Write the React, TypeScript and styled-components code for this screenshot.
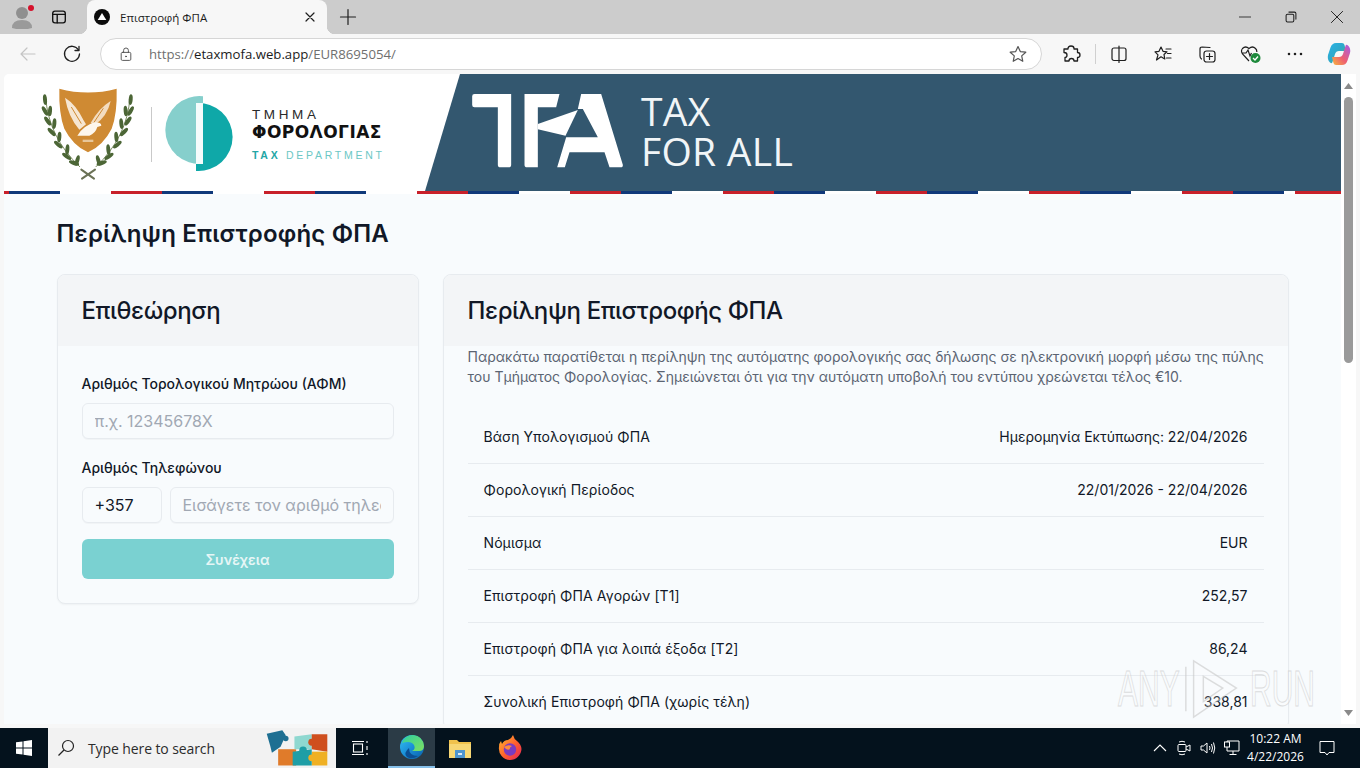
import React from "react";
import styled, { createGlobalStyle } from "styled-components";

const Global = createGlobalStyle`
  html, body { margin: 0; padding: 0; width: 1360px; height: 768px; overflow: hidden; background: #f7f7f7; }
  * { box-sizing: border-box; }
  #root { width: 1360px; height: 768px; }
`;

const UI = `"Open Sans", "Noto Sans", "Liberation Sans", sans-serif`;
const WEB = `Inter, "Noto Sans", "Liberation Sans", sans-serif`;

const Shell = styled.div`
  width: 1360px; height: 768px; display: flex; flex-direction: column; overflow: hidden; font-family: ${UI};
`;
const TabStrip = styled.div`
  height: 34px; flex: none; background: #cccccc; display: flex; align-items: stretch; padding-left: 4px;
`;
const StripSlot = styled.div<{ $w: number }>`
  width: ${(p) => p.$w}px; flex: none; display: flex; align-items: center; justify-content: center; position: relative;
`;
const Tab = styled.div`
  width: 240px; flex: none; margin-left: 9px; margin-right: 4px; background: #f7f7f7; border-radius: 8px 8px 0 0;
  display: flex; align-items: center; padding: 0 9px 0 7px; gap: 10px; position: relative;
  &::before, &::after {
    content: ""; position: absolute; bottom: 0; width: 8px; height: 8px;
  }
  &::before { left: -8px; background: radial-gradient(circle at 0 0, transparent 8px, #f7f7f7 8.5px); }
  &::after { right: -8px; background: radial-gradient(circle at 100% 0, transparent 8px, #f7f7f7 8.5px); }
`;
const TabTitle = styled.span`
  flex: 1; font-size: 11.5px; color: #1c1c1c; white-space: nowrap;
`;
const Spacer = styled.div`flex: 1;`;
const RedDot = styled.span`
  position: absolute; top: 5px; right: 6px; width: 6px; height: 6px; border-radius: 50%; background: #d5112b;
`;
const Toolbar = styled.div`
  height: 40px; flex: none; background: #f7f7f7; display: flex; align-items: center; padding-left: 6px;
`;
const ToolSlot = styled.div<{ $w?: number }>`
  width: ${(p) => p.$w ?? 44}px; flex: none; height: 32px; display: flex; align-items: center; justify-content: center;
`;
const AddressBar = styled.div`
  width: 942px; height: 32px; flex: none; margin-left: 6px; margin-right: 7px; background: #fff; border: 1px solid #d6d6d6;
  border-radius: 16px; display: flex; align-items: center; padding: 0 13px 0 17px;
`;
const Url = styled.span`
  flex: 1; margin-left: 15px; font-size: 13.2px; color: #6f6f6f; white-space: nowrap;
  b { font-weight: 400; color: #1c1c1c; }
`;
const ToolDivider = styled.div`
  width: 1px; height: 20px; margin: 0 1px 0 2px; flex: none; background: #d0d0d0;
`;
const ViewRow = styled.div`
  height: 654px; flex: none; padding: 0 4px 4px; display: flex; background: #f7f7f7;
`;
const Viewport = styled.main`
  flex: 1; min-width: 0; overflow: hidden; position: relative; background: #f8fbfd; border-top-left-radius: 5px; font-family: ${WEB}; color: #111827;
`;
const Banner = styled.header`
  height: 117px; display: flex; background: #fff;
`;
const BrandSide = styled.div`
  width: 421px; flex: none; display: flex; align-items: center; padding-left: 36px; padding-top: 3px;
`;
const BrandDivider = styled.div`
  width: 1px; height: 55px; background: #c9c9c9; margin: 0 13px 0 16px; flex: none;
`;
const DeptText = styled.div`
  margin-left: 18px; display: flex; flex-direction: column; font-family: "Liberation Sans", sans-serif;
`;
const DeptTop = styled.span`
  font-size: 13.5px; line-height: 16px; letter-spacing: 3.6px; color: #2a2a2a;
`;
const DeptMain = styled.span`
  font-family: "DejaVu Sans", sans-serif; font-size: 17px; line-height: 19px; font-weight: 700; letter-spacing: 0.45px; color: #111; white-space: nowrap;
`;
const DeptSub = styled.span`
  font-size: 10.5px; line-height: 14px; margin-top: 6px; letter-spacing: 2.72px; color: #6cc7c5; white-space: nowrap;
  b { color: #23a6a6; }
`;
const HeroSide = styled.div`
  flex: 1; background: #33576f; clip-path: polygon(35px 0, 100% 0, 100% 100%, 0 100%);
  display: flex; align-items: center; padding-left: 47px; padding-bottom: 4px; color: #fff;
`;
const HeroText = styled.div`
  margin-left: 17px; font-family: "Open Sans", sans-serif; font-size: 39px; line-height: 40px; color: #f1f5f7; letter-spacing: 0.3px;
`;
const Stripe = styled.div`
  height: 3px; background: repeating-linear-gradient(90deg, #c8202a 0 51px, #10397a 51px 102px, #fff 102px 153px);
  background-position: -46px 0;
`;
const Page = styled.div`
  width: 1232px; margin: 0 auto; padding-top: 24px;
`;
const PageTitle = styled.h1`
  margin: 0; font-size: 24px; line-height: 32px; font-weight: 600; color: #111827; letter-spacing: 0.17px;
`;
const Columns = styled.div`
  display: grid; grid-template-columns: 362px 846px; gap: 24px; margin-top: 24px; align-items: start;
`;
const Card = styled.section`
  border: 1px solid #e7ebef; border-radius: 8px; background: #f8fbfd; box-shadow: 0 1px 2px rgba(0,0,0,.04); overflow: hidden;
`;
const CardHead = styled.div`
  height: 71px; background: #f3f5f7; padding: 0 24px; display: flex; align-items: center;
`;
const CardTitle = styled.h2`
  margin: 0; font-size: 24px; font-weight: 500; color: #111827; letter-spacing: -0.4px;
`;
const Form = styled.form`
  padding: 24px; display: flex; flex-direction: column;
`;
const Label = styled.label`
  font-size: 14px; line-height: 28px; font-weight: 500; color: #111827; margin-bottom: 5px;
`;
const Input = styled.input<{ $w?: number }>`
  height: 36px; padding: 0 12px; border: 1px solid #e7ebef; border-radius: 6px; background: #f8fbfd; font-family: ${WEB}; font-size: 16px; color: #111827;
  width: ${(p) => (p.$w ? `${p.$w}px` : "100%")}; flex: ${(p) => (p.$w ? "none" : "1 1 auto")}; min-width: 0; box-shadow: 0 1px 1px rgba(0,0,0,.03); outline: none;
  &::placeholder { color: #a1a8b3; opacity: 1; }
`;
const Gap = styled.div`height: 15px; flex: none;`;
const PhoneRow = styled.div`display: flex; gap: 8px; flex: none;`;
const Continue = styled.button`
  height: 40px; margin-top: 16px; border: 0; border-radius: 6px; background: #7ad1d1; color: #e6f6f6; font-family: ${WEB}; font-size: 14px; font-weight: 600; flex: none;
`;
const CardIntro = styled.p`
  margin: 1px 0 0; padding: 0 16px 0 24px; font-size: 14px; line-height: 20px; color: #5b6472;
`;
const Rows = styled.div`
  margin: 24px 24px 0; display: flex; flex-direction: column;
`;
const Row = styled.div`
  height: 53px; flex: none; display: flex; align-items: center; justify-content: space-between; padding: 0 16px 2px;
  font-size: 14px; color: #111827; border-bottom: 1px solid #e7ebef;
`;
const RowLabel = styled.span`letter-spacing: 0.08px;`;
const Scrollbar = styled.div`
  width: 15px; flex: none; background: #fff; display: flex; flex-direction: column; align-items: center; padding: 9px 0 8px;
`;
const ScrollArrow = styled.svg`width: 9px; height: 6px; flex: none; fill: #8a8a8a;`;
const ScrollThumb = styled.div`
  width: 9px; height: 266px; border-radius: 5px; background: #9a9a9a; margin-top: 8px; flex: none;
`;
const Watermark = styled.div`
  position: absolute; left: 1114px; top: 584px; display: flex; align-items: center; pointer-events: none; opacity: .6;
`;
const WatermarkWord = styled.span`
  font-family: "Liberation Sans", sans-serif; font-size: 50px; line-height: 50px; color: rgba(255,255,255,.4); -webkit-text-stroke: 1px #c9c9c9;
  display: inline-block; width: 62px; transform: scaleX(.6); transform-origin: left center; white-space: nowrap;
`;
const Taskbar = styled.footer`
  height: 40px; flex: none; background: #04121d; display: flex; align-items: stretch; color: #fff;
`;
const Start = styled.div`
  width: 48px; flex: none; display: flex; align-items: center; justify-content: center;
`;
const Search = styled.div`
  width: 288px; flex: none; background: #f2f2f2; display: flex; align-items: center; padding: 0 8px 0 9px; color: #333;
`;
const SearchText = styled.span`
  margin-left: 13px; flex: 1; font-size: 14px; letter-spacing: -0.1px; color: #2c2c2c;
`;
const TaskIcon = styled.div<{ $active?: boolean; $w: number; $pr?: number }>`
  width: ${(p) => p.$w}px; flex: none; display: flex; align-items: center; justify-content: center; padding-right: ${(p) => p.$pr ?? 0}px;
  background: ${(p) => (p.$active ? "#2b3b46" : "transparent")}; border-bottom: ${(p) => (p.$active ? "2px solid #86c0ea" : "0")};
`;
const Tray = styled.div`
  margin-left: auto; display: flex; align-items: center; padding-right: 13px;
`;
const TrayIcon = styled.div<{ $w?: number }>`
  width: ${(p) => p.$w ?? 24}px; display: flex; align-items: center; justify-content: center; flex: none;
`;
const Clock = styled.div`
  width: 63px; text-align: center; font-size: 12px; line-height: 18px; color: #fff; flex: none;
`;

const S = { fill: "none", stroke: "#1f1f1f", strokeWidth: 1.2, strokeLinecap: "round" as const, strokeLinejoin: "round" as const };

const Leaf = ({ x, y, r }: { x: number; y: number; r: number }) => (
  <ellipse cx={x} cy={y} rx="6" ry="16" fill="#4c6636" transform={`rotate(${r} ${x} ${y})`} />
);
const leavesL: [number, number, number][] = [
  [135, 78, -5], [135, 112, -30], [150, 112, 5], [143, 142, -35], [163, 150, 5], [155, 175, -45],
  [178, 190, 5], [175, 213, -50], [202, 228, 5], [200, 248, -55], [232, 260, 15], [222, 268, -70],
];
const Branch = () => (
  <>
    <path d="M137 70Q145 190 240 280" fill="none" stroke="#7d8f63" strokeWidth="3" />
    {leavesL.map(([x, y, r]) => <Leaf key={`${x}${y}`} x={x} y={y} r={r} />)}
  </>
);
const Emblem = () => (
  <svg width="95" height="95" viewBox="120 40 285 285" style={{ flex: "none" }}>
    <path d="M178 45 Q264 68 350 45 Q352 120 335 165 Q310 215 264 236 Q218 215 193 165 Q176 120 178 45Z" fill="#cf8a33" />
    <path d="M195 72 Q228 92 252 142 L258 152 L238 168 Q205 130 195 72Z" fill="#f6e6d2" />
    <path d="M332 82 Q296 104 272 148 L284 154 Q322 128 332 82Z" fill="#f3dcc0" />
    <path d="M232 186 Q250 156 284 146 Q304 146 304 156 L292 160 Q286 180 268 186Z" fill="#fdf6ec" />
    <path d="M214 100L244 150M232 96L254 140M310 104L282 146" stroke="#cf8a33" strokeWidth="3" fill="none" />
    <rect x="248" y="198" width="32" height="7" fill="#e8c79a" />
    <Branch />
    <g transform="matrix(-1 0 0 1 527 0)"><Branch /></g>
    <path d="M246 315 L285 288 M282 315 L244 288" stroke="#6b7256" strokeWidth="6" strokeLinecap="round" />
  </svg>
);

const CircleLogo = () => (
  <svg width="69" height="78" viewBox="0 0 69 78" style={{ flex: "none" }}>
    <path d="M38 1.200A34 34 0 1 0 38 68.800Z" fill="#86cfcc" />
    <path d="M31 8.100A34 34 0 1 1 31 75.900Z" fill="#0fa8a8" />
    <rect x="31" y="8" width="7" height="61" fill="#f4fbfb" />
  </svg>
);

const TfaLogo = () => (
  <svg width="152" height="74" viewBox="188 60 455 222" style={{ flex: "none" }}>
    <g fill="#fff">
      <path d="M195 60H305V272Q305 280 297 280H273Q265 280 265 272V100H195Q188 100 188 93V67Q188 60 195 60Z" />
      <path d="M345 60H450L440 100H385V280H353Q345 280 345 272Z" />
      <path d="M385 150L505 108L468 185L385 166Z" />
      <path d="M515 60H575L640 272Q641 280 633 280H600L585 235H480L466 280H443L470 190H565L520 105H505Z" />
    </g>
  </svg>
);

const Avatar = () => (
  <svg width="22" height="24" viewBox="0 0 22 24">
    <circle cx="11" cy="8" r="6" fill="#8f8f8f" />
    <path d="M1 23Q1 15 11 15Q21 15 21 23Q11 26 1 23Z" fill="#9a9a9a" />
  </svg>
);
const Favicon = () => (
  <svg width="16" height="16" viewBox="0 0 16 16" style={{ flex: "none" }}>
    <circle cx="8" cy="8" r="8" fill="#0b0b0b" />
    <path d="M8 4L12.300 11H3.700Z" fill="#fff" />
  </svg>
);
const Ic = ({ size = 20, children }: { size?: number; children: React.ReactNode }) => (
  <svg width={size} height={size} viewBox="0 0 20 20" style={{ flex: "none" }} {...S}>{children}</svg>
);

const Copilot = () => (
  <svg width="24" height="24" viewBox="0 0 24 24">
    <defs>
      <linearGradient id="cpa" x1="0" y1="0" x2="1" y2="1"><stop offset="0" stopColor="#2ab4e8" /><stop offset=".5" stopColor="#2fa8c8" /><stop offset="1" stopColor="#4fc06a" /></linearGradient>
      <linearGradient id="cpb" x1="0" y1="1" x2="1" y2="0"><stop offset="0" stopColor="#f6b73c" /><stop offset=".45" stopColor="#ee5f70" /><stop offset="1" stopColor="#a65ce8" /></linearGradient>
    </defs>
    <path d="M9 1H15Q17 1 17.500 3L19 9H12Q9 9 8 12L5.500 20Q5 22 3 20.500Q0 18 1 13L3.500 5.500Q5 1 9 1Z" fill="url(#cpa)" />
    <path d="M15 23H9Q7 23 6.500 21L5 15H12Q15 15 16 12L18.500 4Q19 2 21 3.500Q24 6 23 11L20.500 18.500Q19 23 15 23Z" fill="url(#cpb)" />
  </svg>
);

const EdgeLogo = () => (
  <svg width="26" height="26" viewBox="0 0 26 26">
    <defs>
      <linearGradient id="eg" x1="0" y1="0" x2="1" y2="1"><stop offset="0" stopColor="#35c1f1" /><stop offset=".5" stopColor="#1a8fd8" /><stop offset="1" stopColor="#0a5fa8" /></linearGradient>
      <linearGradient id="eg2" x1="0" y1="0" x2="1" y2="1"><stop offset="0" stopColor="#2fd0a0" /><stop offset="1" stopColor="#7fe060" /></linearGradient>
    </defs>
    <circle cx="13" cy="13" r="12" fill="url(#eg)" />
    <path d="M3 9Q6 1 14 1Q24 2 25 12Q25 17 20 17H13Q17 15 15 11Q12 6 3 9Z" fill="url(#eg2)" />
    <path d="M10 14Q10 22 19 22Q13 26 8 23Q4 19 10 14Z" fill="#0b4f94" />
  </svg>
);

const Folder = () => (
  <svg width="24" height="22" viewBox="0 0 24 22">
    <path d="M1 3H9L11 5H23V20H1Z" fill="#f0c24c" />
    <rect x="1" y="7" width="22" height="14" fill="#f7d774" />
    <rect x="7" y="13" width="10" height="8" fill="#4d94cf" />
    <rect x="10" y="16" width="4" height="2" fill="#dfeaf3" />
  </svg>
);

const Firefox = () => (
  <svg width="24" height="26" viewBox="0 0 24 26">
    <defs>
      <linearGradient id="ff" x1="0" y1="0" x2="1" y2="1"><stop offset="0" stopColor="#ffbd2e" /><stop offset=".55" stopColor="#ff5c2e" /><stop offset="1" stopColor="#e2225c" /></linearGradient>
    </defs>
    <path d="M12 25A11.500 11.500 0 0 1 1 12Q1 8 3 6L4 9Q6 5 10 5Q14 3 15 0Q16 4 19 6Q23 9 23.500 14A11.500 11.500 0 0 1 12 25Z" fill="url(#ff)" />
    <circle cx="12" cy="14.500" r="6.200" fill="#7a3cc0" />
    <path d="M6 12Q10 9 14 11Q11 13 12 14Q9 16 6 12Z" fill="#ff8a3c" />
  </svg>
);

const Puzzle = () => (
  <svg width="63" height="36" viewBox="770 30 182 103" style={{ flex: "none" }}>
    <path d="M808 85H860V132H808Z" fill="#e07b2a" />
    <path d="M855 48L905 42V85H855Z" fill="#8fd8d0" />
    <path d="M905 42H950V92L905 85Z" fill="#cf4f1e" />
    <path d="M905 92H950V132H905Z" fill="#efb024" />
    <path d="M850 92L905 85V132H850Z" fill="#1f9ea6" />
    <circle cx="880" cy="88" r="11" fill="#1f9ea6" />
    <circle cx="905" cy="65" r="10" fill="#cf4f1e" />
    <circle cx="905" cy="110" r="10" fill="#efb024" />
    <path d="M775 40L820 30L830 45L822 62L815 78L790 95L785 75Z" fill="#1e6f92" />
    <circle cx="830" cy="54" r="8" fill="#1e6f92" />
  </svg>
);

export default function App() {
  const rows: [string, string][] = [
    ["Βάση Υπολογισμού ΦΠΑ", "Ημερομηνία Εκτύπωσης: 22/04/2026"],
    ["Φορολογική Περίοδος", "22/01/2026 - 22/04/2026"],
    ["Νόμισμα", "EUR"],
    ["Επιστροφή ΦΠΑ Αγορών [T1]", "252,57"],
    ["Επιστροφή ΦΠΑ για λοιπά έξοδα [T2]", "86,24"],
    ["Συνολική Επιστροφή ΦΠΑ (χωρίς τέλη)", "338,81"],
  ];
  return (
    <Shell>
      <Global />
      <TabStrip>
        <StripSlot $w={36}><Avatar /><RedDot /></StripSlot>
        <StripSlot $w={38}>
          <Ic size={18}><rect x="3" y="3.500" width="14" height="13" rx="2.500" strokeWidth="1.500" stroke="#111" /><path d="M3 7H17M8 7V16.500" strokeWidth="1.500" stroke="#111" /></Ic>
        </StripSlot>
        <Tab>
          <Favicon />
          <TabTitle>Επιστροφή ΦΠΑ</TabTitle>
          <Ic size={16}><path d="M5 5L15 15M15 5L5 15" strokeWidth="1.500" /></Ic>
        </Tab>
        <StripSlot $w={34}><Ic size={20}><path d="M10 2.500V17.500M2.500 10H17.500" /></Ic></StripSlot>
        <Spacer />
        <StripSlot $w={46}><Ic size={14}><path d="M2 10H18" /></Ic></StripSlot>
        <StripSlot $w={46}><Ic size={14}><rect x="3" y="6" width="11" height="11" rx="2" strokeWidth="1.500" /><path d="M7 3H15Q17 3 17 5V13" strokeWidth="1.500" /></Ic></StripSlot>
        <StripSlot $w={46}><Ic size={16}><path d="M3 3L17 17M17 3L3 17" /></Ic></StripSlot>
      </TabStrip>
      <Toolbar>
        <ToolSlot><Ic size={20}><path d="M17 10H3M9 4L3 10L9 16" stroke="#c4c4c4" /></Ic></ToolSlot>
        <ToolSlot><Ic size={20}><path d="M16.500 6A7.500 7.500 0 1 0 17.500 10" strokeWidth="1.300" /><path d="M17 2.500V6.500H13" strokeWidth="1.300" /></Ic></ToolSlot>
        <AddressBar>
          <Ic size={16}><rect x="4" y="8" width="12" height="10" rx="1.500" stroke="#555" /><path d="M7 8V5.500A3 3 0 0 1 13 5.500V8" stroke="#555" /><circle cx="10" cy="13" r=".6" fill="#555" stroke="#555" /></Ic>
          <Url>https://<b>etaxmofa.web.app</b>/EUR8695054/</Url>
          <Ic size={20}><path d="M10 2.500L12.300 7.600L17.800 8.200L13.700 11.900L14.800 17.300L10 14.600L5.200 17.300L6.300 11.900L2.200 8.200L7.700 7.600Z" stroke="#555" /></Ic>
        </AddressBar>
        <ToolSlot><Ic size={20}><path d="M7 4.500Q7 2 10 2Q13 2 13 4.500L13 5H16.500V8.500Q19 8.500 19 11T16.500 13.500V17H13Q13 14.500 10.500 14.500T8 17H4V13.500Q6 13.500 6 11T3 8.500V5H7Z" strokeWidth="1.300" /></Ic></ToolSlot>
        <ToolDivider />
        <ToolSlot><Ic size={20}><rect x="3" y="4" width="14" height="12.500" rx="2" /><path d="M10 2V18.500" /></Ic></ToolSlot>
        <ToolSlot><Ic size={20}><path d="M8 3L10 7.300L14 7.800L11 10.500L11.800 15L8 12.800L3.500 16L5 10.800L2 7.800L6 7.300Z" /><path d="M13 5H18M14.500 9.500H18M13.500 14H18" /></Ic></ToolSlot>
        <ToolSlot><Ic size={20}><path d="M13 3.500L5 3Q3 3 3 5V12Q3 14 4.500 15" /><rect x="7" y="7" width="11" height="11" rx="2.500" /><path d="M12.500 9.500V15.500M9.500 12.500H15.500" /></Ic></ToolSlot>
        <ToolSlot>
          <svg width="22" height="20" viewBox="0 0 22 20">
            <path d="M9 17L2.500 10Q0.500 7 2.500 4.500Q5.500 1.500 9 4.500Q12.500 1.500 15.500 4.500Q17 6 16.800 8M2 9H6L8 6L10 12L11.500 9" fill="none" stroke="#1f1f1f" strokeWidth="1.200" />
            <circle cx="15.500" cy="14" r="5" fill="#1e8a3c" />
            <path d="M13 14L15 16L18 12.500" fill="none" stroke="#fff" strokeWidth="1.300" />
          </svg>
        </ToolSlot>
        <ToolSlot><Ic size={20}><circle cx="4" cy="10" r=".7" fill="#1f1f1f" /><circle cx="10" cy="10" r=".7" fill="#1f1f1f" /><circle cx="16" cy="10" r=".7" fill="#1f1f1f" /></Ic></ToolSlot>
        <ToolSlot><Copilot /></ToolSlot>
      </Toolbar>
      <ViewRow>
        <Viewport>
          <Banner>
            <BrandSide>
              <Emblem />
              <BrandDivider />
              <CircleLogo />
              <DeptText>
                <DeptTop>ΤΜΗΜΑ</DeptTop>
                <DeptMain>ΦΟΡΟΛΟΓΙΑΣ</DeptMain>
                <DeptSub><b>TAX</b> DEPARTMENT</DeptSub>
              </DeptText>
            </BrandSide>
            <HeroSide>
              <TfaLogo />
              <HeroText>TAX<br />FOR ALL</HeroText>
            </HeroSide>
          </Banner>
          <Stripe />
          <Page>
            <PageTitle>Περίληψη Επιστροφής ΦΠΑ</PageTitle>
            <Columns>
              <Card>
                <CardHead><CardTitle>Επιθεώρηση</CardTitle></CardHead>
                <Form>
                  <Label>Αριθμός Τορολογικού Μητρώου (ΑΦΜ)</Label>
                  <Input placeholder="π.χ. 12345678X" />
                  <Gap />
                  <Label>Αριθμός Τηλεφώνου</Label>
                  <PhoneRow>
                    <Input $w={80} value="+357" readOnly />
                    <Input placeholder="Εισάγετε τον αριθμό τηλεφώνου" />
                  </PhoneRow>
                  <Continue type="button">Συνέχεια</Continue>
                </Form>
              </Card>
              <Card>
                <CardHead><CardTitle>Περίληψη Επιστροφής ΦΠΑ</CardTitle></CardHead>
                <CardIntro>Παρακάτω παρατίθεται η περίληψη της αυτόματης φορολογικής σας δήλωσης σε ηλεκτρονική μορφή μέσω της πύλης του Τμήματος Φορολογίας. Σημειώνεται ότι για την αυτόματη υποβολή του εντύπου χρεώνεται τέλος €10.</CardIntro>
                <Rows>
                  {rows.map(([a, b]) => (
                    <Row key={a}><RowLabel>{a}</RowLabel><span>{b}</span></Row>
                  ))}
                </Rows>
              </Card>
            </Columns>
          </Page>
          <Watermark>
            <WatermarkWord>ANY</WatermarkWord>
            <svg width="70" height="62" viewBox="0 0 72 62" style={{ flex: "none" }}>
              <path d="M6 8V54M14 2L58 30L14 60Z M24 18L44 30L24 44Z" fill="rgba(255,255,255,.3)" stroke="#c9c9c9" strokeWidth="1.500" />
            </svg>
            <WatermarkWord>RUN</WatermarkWord>
          </Watermark>
        </Viewport>
        <Scrollbar>
          <ScrollArrow viewBox="0 0 9 6"><path d="M4.500 0L9 6H0Z" /></ScrollArrow>
          <ScrollThumb />
          <Spacer />
          <ScrollArrow viewBox="0 0 9 6"><path d="M0 0H9L4.500 6Z" /></ScrollArrow>
        </Scrollbar>
      </ViewRow>
      <Taskbar>
        <Start>
          <svg width="16" height="16" viewBox="0 0 16 16"><path d="M0 2.300L6.500 1.400V7.500H0ZM7.500 1.300L16 0V7.500H7.500ZM0 8.500H6.500V14.600L0 13.700ZM7.500 8.500H16V16L7.500 14.700Z" fill="#fff" /></svg>
        </Start>
        <Search>
          <svg width="18" height="18" viewBox="0 0 18 18" style={{ flex: "none" }}><circle cx="11" cy="7" r="5.500" fill="none" stroke="#222" strokeWidth="1.200" /><path d="M7 11L1.500 16.500" stroke="#222" strokeWidth="1.200" /></svg>
          <SearchText>Type here to search</SearchText>
          <Puzzle />
        </Search>
        <TaskIcon $w={52} $pr={4}>
          <svg width="16" height="16" viewBox="0 0 16 16" fill="none" stroke="#fff" strokeWidth="1.100"><rect x="1.500" y="4" width="9" height="8" /><path d="M0 1.500H12M0 14.500H12M15 1V3M15 6V10M15 13V15" /></svg>
        </TaskIcon>
        <TaskIcon $w={47} $active><EdgeLogo /></TaskIcon>
        <TaskIcon $w={49}><Folder /></TaskIcon>
        <TaskIcon $w={52}><Firefox /></TaskIcon>
        <Tray>
          <TrayIcon><svg width="14" height="14" viewBox="0 0 14 14" fill="none" stroke="#fff" strokeWidth="1.100"><path d="M1 10L7 4L13 10" /></svg></TrayIcon>
          <TrayIcon><svg width="16" height="16" viewBox="0 0 16 16" fill="none" stroke="#fff" strokeWidth="1"><rect x="2" y="4.500" width="8" height="7" rx="1" /><path d="M10 7L14 5V11L10 9M3 2Q6 0.500 9 2M3 14Q6 15.500 9 14" /></svg></TrayIcon>
          <TrayIcon><svg width="16" height="16" viewBox="0 0 16 16" fill="none" stroke="#fff" strokeWidth="1"><path d="M1 6V10H3.500L7 13V3L3.500 6ZM9.500 6Q10.500 8 9.500 10M11.500 4Q13.500 8 11.500 12M13.500 2.500Q16 8 13.500 13.500" /></svg></TrayIcon>
          <TrayIcon><svg width="16" height="16" viewBox="0 0 16 16" fill="none" stroke="#fff" strokeWidth="1"><path d="M3 1H15V11H3ZM9 11V14M5.500 14.500H12.500" /><rect x="0.500" y="2" width="5" height="5" fill="#04121d" /></svg></TrayIcon>
          <Clock>10:22 AM<br />4/22/2026</Clock>
          <TrayIcon $w={40}><svg width="16" height="16" viewBox="0 0 16 16" fill="none" stroke="#fff" strokeWidth="1"><path d="M1 1.500H15V12.500H10L8 15L6 12.500H1Z" /></svg></TrayIcon>
        </Tray>
      </Taskbar>
    </Shell>
  );
}
